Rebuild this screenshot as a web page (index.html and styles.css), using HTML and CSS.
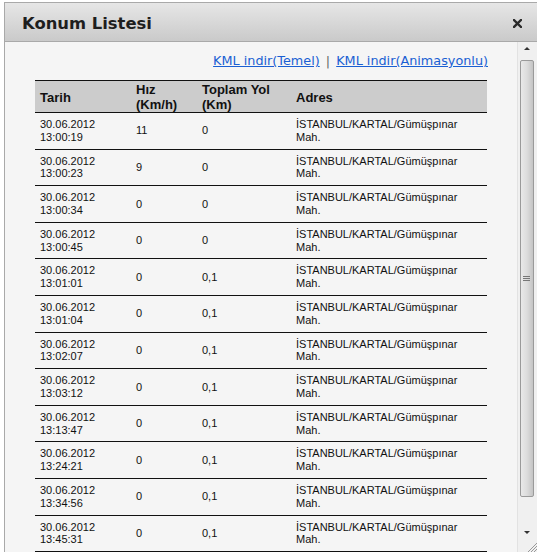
FILE: index.html
```html
<!DOCTYPE html>
<html lang="tr">
<head>
<meta charset="utf-8">
<title>Konum Listesi</title>
<link rel="stylesheet" href="styles.css">
</head>
<body>
<div class="dialog">
  <div class="header">
    <span class="title">Konum Listesi</span>
    <svg class="close" width="9" height="9" viewBox="0 0 9 9"><path d="M1 1 L8 8 M8 1 L1 8" stroke="#2a2a2a" stroke-width="2.4" stroke-linecap="square"/></svg>
  </div>
  <div class="body">
    <div class="main">
      <div class="links"><a href="#">KML indir(Temel)</a> <span class="sep">|</span> <a href="#">KML indir(Animasyonlu)</a></div>
      <table class="list">
        <colgroup><col class="c1"><col class="c2"><col class="c3"><col class="c4"></colgroup>
        <thead>
          <tr><th>Tarih</th><th>Hız<br>(Km/h)</th><th>Toplam Yol<br>(Km)</th><th>Adres</th></tr>
        </thead>
        <tbody>
          <tr><td>30.06.2012<br>13:00:19</td><td>11</td><td>0</td><td>İSTANBUL/KARTAL/Gümüşpınar Mah.</td></tr>
          <tr><td>30.06.2012<br>13:00:23</td><td>9</td><td>0</td><td>İSTANBUL/KARTAL/Gümüşpınar Mah.</td></tr>
          <tr><td>30.06.2012<br>13:00:34</td><td>0</td><td>0</td><td>İSTANBUL/KARTAL/Gümüşpınar Mah.</td></tr>
          <tr><td>30.06.2012<br>13:00:45</td><td>0</td><td>0</td><td>İSTANBUL/KARTAL/Gümüşpınar Mah.</td></tr>
          <tr><td>30.06.2012<br>13:01:01</td><td>0</td><td>0,1</td><td>İSTANBUL/KARTAL/Gümüşpınar Mah.</td></tr>
          <tr><td>30.06.2012<br>13:01:04</td><td>0</td><td>0,1</td><td>İSTANBUL/KARTAL/Gümüşpınar Mah.</td></tr>
          <tr><td>30.06.2012<br>13:02:07</td><td>0</td><td>0,1</td><td>İSTANBUL/KARTAL/Gümüşpınar Mah.</td></tr>
          <tr><td>30.06.2012<br>13:03:12</td><td>0</td><td>0,1</td><td>İSTANBUL/KARTAL/Gümüşpınar Mah.</td></tr>
          <tr><td>30.06.2012<br>13:13:47</td><td>0</td><td>0,1</td><td>İSTANBUL/KARTAL/Gümüşpınar Mah.</td></tr>
          <tr><td>30.06.2012<br>13:24:21</td><td>0</td><td>0,1</td><td>İSTANBUL/KARTAL/Gümüşpınar Mah.</td></tr>
          <tr><td>30.06.2012<br>13:34:56</td><td>0</td><td>0,1</td><td>İSTANBUL/KARTAL/Gümüşpınar Mah.</td></tr>
          <tr><td>30.06.2012<br>13:45:31</td><td>0</td><td>0,1</td><td>İSTANBUL/KARTAL/Gümüşpınar Mah.</td></tr>
        </tbody>
      </table>
    </div>
    <div class="scrollbar">
      <div class="arrow up"></div>
      <div class="thumb"><span class="grip"></span></div>
      <div class="track-end"><div class="arrow down"></div></div>
      <svg class="resize" width="10" height="10" viewBox="0 0 10 10"><path d="M10 1 L1 10 M10 4 L4 10 M10 7 L7 10" stroke="#999" stroke-width="1"/></svg>
    </div>
  </div>
</div>
</body>
</html>
```

FILE: styles.css
```css
html, body {
  margin: 0;
  padding: 0;
  background: #ffffff;
  overflow: hidden;
}
body {
  width: 537px;
  height: 552px;
}
.dialog {
  margin: 2px 0 0 4px;
  height: 550px;
  border-left: 1px solid #a9a9a9;
  border-top: 1px solid #a9a9a9;
  display: flex;
  flex-direction: column;
  box-sizing: border-box;
}
.header {
  height: 38px;
  flex: none;
  border-bottom: 1px solid #a9a9a9;
  background: linear-gradient(#e6e6e6, #cacaca);
  display: flex;
  align-items: center;
  justify-content: space-between;
  padding: 0 15px 0 17px;
}
.title {
  font-family: "DejaVu Sans", Verdana, sans-serif;
  font-weight: bold;
  font-size: 16.4px;
  color: #1e1e1e;
  position: relative;
  top: 1px;
}
.close {
  display: block;
  position: relative;
  top: 1px;
}
.body {
  flex: 1;
  display: flex;
  background: #f5f5f5;
  min-height: 0;
}
.main {
  flex: 1;
  overflow: hidden;
  padding: 11px 0 0 30px;
}
.links {
  font-family: "DejaVu Sans", Verdana, sans-serif;
  font-size: 12.8px;
  line-height: 16px;
  text-align: right;
  width: 453px;
  color: #555;
}
.links a {
  color: #1a5fd3;
  text-decoration: underline;
}
.sep {
  color: #666;
  margin: 0 2px;
}
.list {
  margin-top: 11px;
  width: 452px;
  table-layout: fixed;
  border-collapse: separate;
  border-spacing: 0;
  font-family: "Liberation Sans", Arial, sans-serif;
  color: #111;
}
.c1 { width: 96px; }
.c2 { width: 66px; }
.c3 { width: 94px; }
.c4 { width: 196px; }
.list th {
  background: #cccccc;
  border-top: 1px solid #111;
  border-bottom: 1px solid #111;
  font-size: 13px;
  font-weight: bold;
  line-height: 15px;
  text-align: left;
  padding: 1px 5px 0 5px;
  vertical-align: middle;
}
.list td {
  font-size: 11px;
  line-height: 12.8px;
  padding: 5px 5px;
  border-bottom: 1px solid #111;
  vertical-align: middle;
}
.scrollbar {
  width: 17px;
  padding-right: 2px;
  flex: none;
  background: #f0f0f0;
  border-left: 1px solid #e2e2e2;
  position: relative;
  display: flex;
  flex-direction: column;
  align-items: center;
}
.arrow {
  width: 0;
  height: 0;
  border-left: 3px solid transparent;
  border-right: 3px solid transparent;
}
.arrow.up {
  margin: 5px 0 0 0;
  border-bottom: 3px solid #333;
}
.thumb {
  margin-top: 10px;
  width: 14px;
  height: 437px;
  box-sizing: border-box;
  border: 1px solid #9a9a9a;
  border-radius: 2px;
  background: linear-gradient(to right, #e9e9e9, #dcdcdc 50%, #c4c4c4);
  display: flex;
  align-items: center;
  justify-content: center;
}
.grip {
  width: 7px;
  height: 5px;
  background: repeating-linear-gradient(#777 0 1px, transparent 1px 2px);
}
.track-end {
  flex: 1;
  display: flex;
  align-items: flex-end;
  justify-content: center;
  padding-bottom: 18px;
}
.arrow.down {
  border-top: 3px solid #333;
}
.resize {
  position: absolute;
  right: 0;
  bottom: 0;
  display: block;
}
```
